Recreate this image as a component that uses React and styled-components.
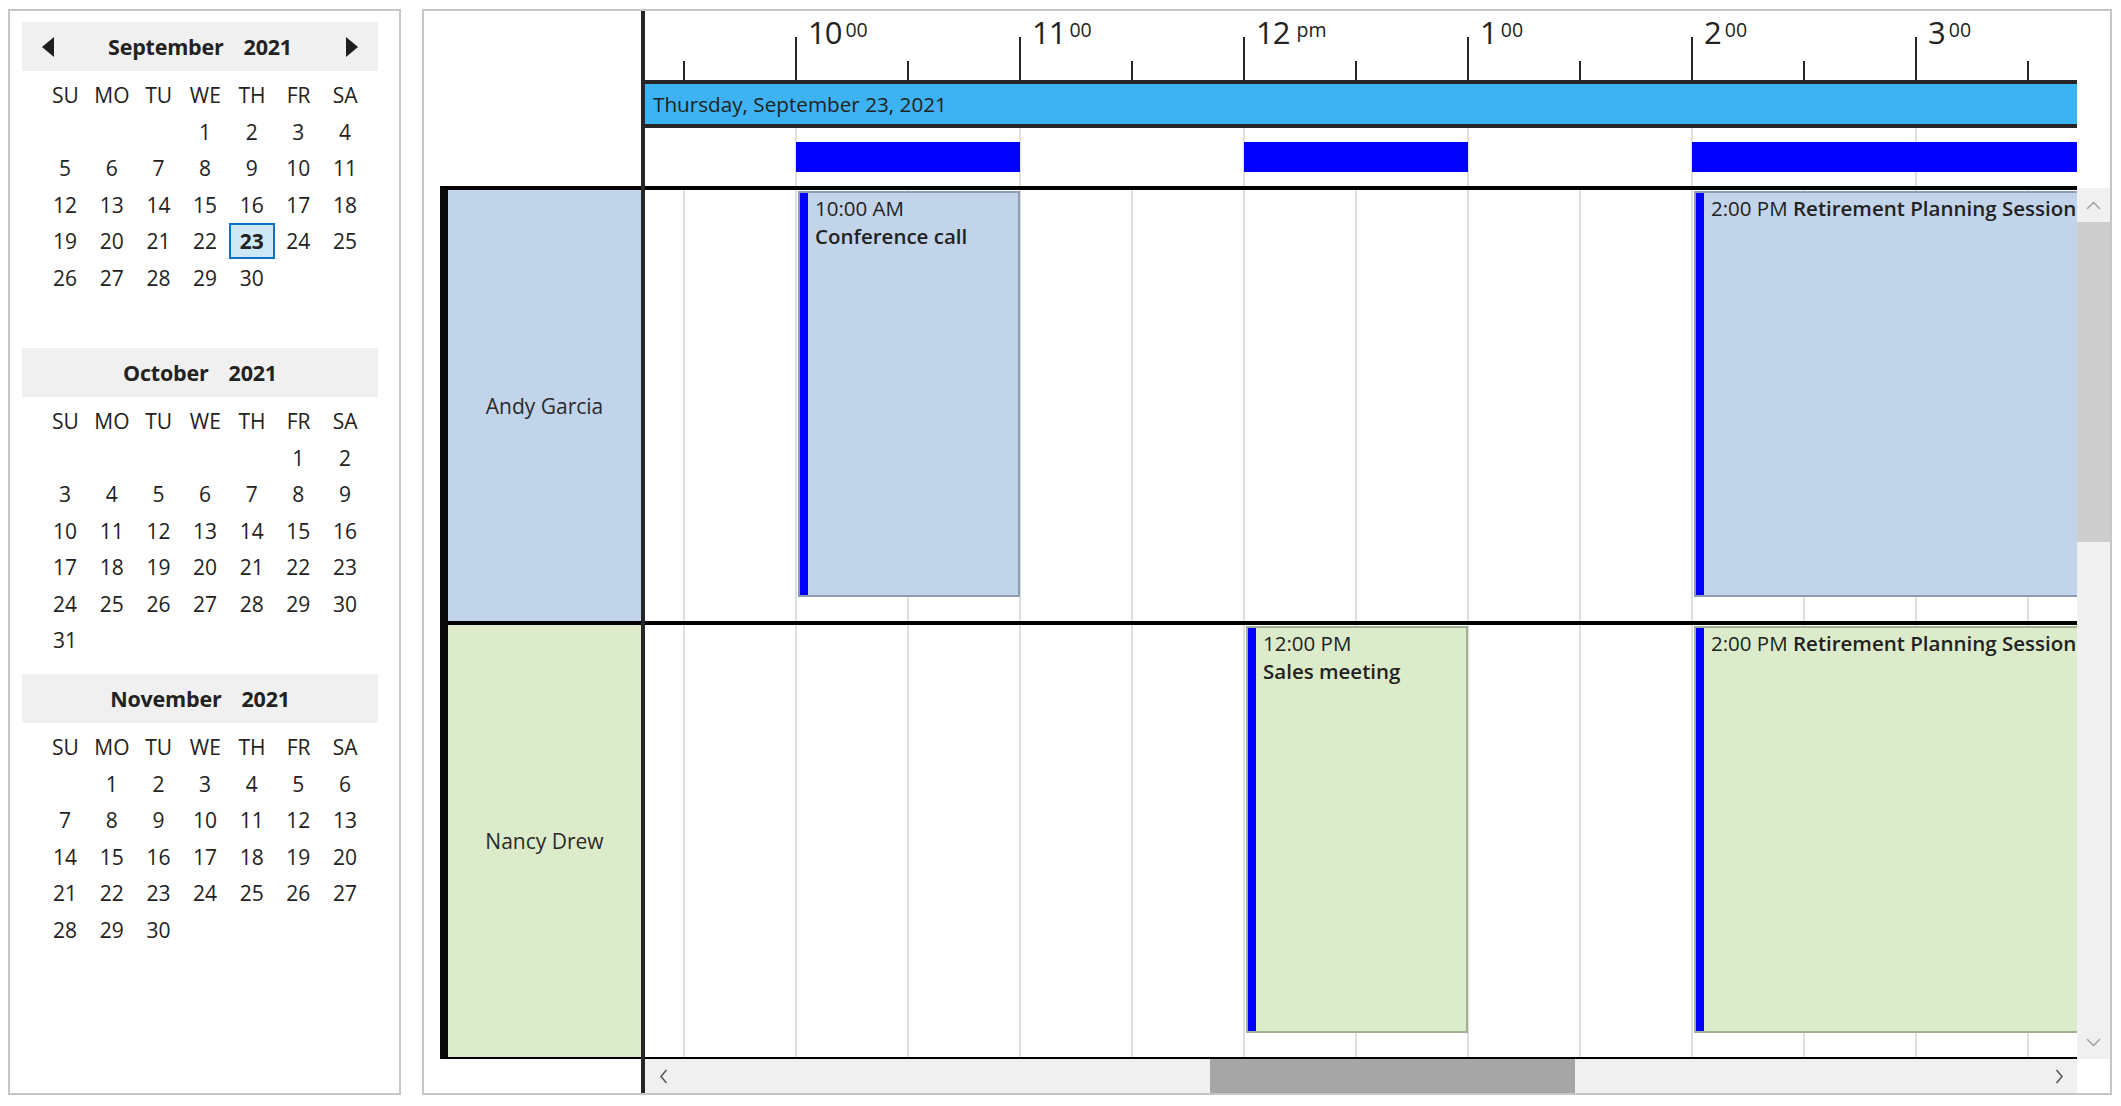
import React from 'react';
import styled, { createGlobalStyle } from 'styled-components';

const GlobalStyle = createGlobalStyle`
  html, body { margin: 0; padding: 0; background: #fff; }
  body { font-family: "Open Sans", "Noto Sans", sans-serif; color: #222; }
  *, *::before, *::after { box-sizing: border-box; }
`;

const HOUR_PX = 224;
const ORIGIN = 151;
const xAt = (h) => ORIGIN + (h - 10) * HOUR_PX;

const Page = styled.div`
  display: flex;
  align-items: flex-start;
  gap: 21px;
  padding: 9px 0 0 8px;
  width: 2121px;
  height: 1106px;
  overflow: hidden;
`;

/* ---------- Calendar ---------- */
const CalendarPanel = styled.div`
  width: 393px;
  height: 1086px;
  border: 2px solid #c6c6c6;
  padding: 11px 0 0 12px;
  background: #fff;
`;

const Month = styled.section`
  width: 356px;
`;

const MonthHeader = styled.div`
  height: 49px;
  background: #f0f0f0;
  display: grid;
  grid-template-columns: 12px 1fr 12px;
  align-items: center;
  padding: 0 20px;
`;

const MonthTitle = styled.div`
  display: flex;
  justify-content: center;
  gap: 20px;
  font-size: 21.5px;
  font-weight: 700;
  color: #222;
  letter-spacing: -0.2px;
`;

const ArrowSlot = styled.div`
  display: flex;
  align-items: center;
  justify-content: center;
  height: 20px;
`;

const DayGrid = styled.div`
  display: grid;
  grid-template-columns: repeat(7, 46.67px);
  grid-auto-rows: 36.5px;
  margin: 6px 0 15.5px 20px;
`;

const DayName = styled.div`
  display: flex;
  align-items: center;
  justify-content: center;
  font-size: 21px;
  color: #222;
`;

const DayCell = styled.div`
  display: flex;
  align-items: center;
  justify-content: center;
  font-size: 21px;
  color: #222;
  font-weight: ${(p) => (p.$selected ? 700 : 400)};
  background: ${(p) => (p.$selected ? '#cde9f6' : 'transparent')};
  border: 2px solid ${(p) => (p.$selected ? '#0a72c6' : 'transparent')};
  margin: 0 0.5px 0.5px 0;
`;

const DAY_NAMES = ['SU', 'MO', 'TU', 'WE', 'TH', 'FR', 'SA'];

const MONTHS = [
  { name: 'September', year: 2021, start: 3, days: 30, nav: true, selected: 23 },
  { name: 'October', year: 2021, start: 5, days: 31 },
  { name: 'November', year: 2021, start: 1, days: 30 },
];

function MonthCalendar({ m }) {
  const cells = [];
  for (let i = 0; i < 42; i++) {
    const d = i - m.start + 1;
    cells.push(d >= 1 && d <= m.days ? d : null);
  }
  return (
    <Month>
      <MonthHeader>
        <ArrowSlot>
          {m.nav && (
            <svg width="12" height="20" viewBox="0 0 12 20">
              <polygon points="12,0 12,20 0,10" fill="#1e1e1e" />
            </svg>
          )}
        </ArrowSlot>
        <MonthTitle>
          <span>{m.name}</span>
          <span>{m.year}</span>
        </MonthTitle>
        <ArrowSlot>
          {m.nav && (
            <svg width="12" height="20" viewBox="0 0 12 20">
              <polygon points="0,0 0,20 12,10" fill="#1e1e1e" />
            </svg>
          )}
        </ArrowSlot>
      </MonthHeader>
      <DayGrid>
        {DAY_NAMES.map((n) => (
          <DayName key={n}>{n}</DayName>
        ))}
        {cells.map((d, i) => (
          <DayCell key={i} $selected={d === m.selected}>
            {d ?? ''}
          </DayCell>
        ))}
      </DayGrid>
    </Month>
  );
}

/* ---------- Scheduler ---------- */
const SchedulerPanel = styled.div`
  width: 1690px;
  height: 1086px;
  border: 2px solid #c6c6c6;
  display: grid;
  grid-template-columns: 217px 4px 1432px 33px;
  grid-template-rows: 175px 873px 34px;
  background: #fff;
`;

const Blank = styled.div`
  background: #fff;
`;

const Divider = styled.div`
  grid-column: 2;
  grid-row: 1 / -1;
  background: #262626;
`;

const TimeHeader = styled.div`
  display: flex;
  flex-direction: column;
  overflow: hidden;
`;

const Ruler = styled.div`
  position: relative;
  height: 69px;
  overflow: hidden;
`;

const Tick = styled.div`
  position: absolute;
  bottom: 0;
  width: 2px;
  height: ${(p) => (p.$major ? 43 : 19)}px;
  background: #262626;
`;

const HourLabel = styled.div`
  position: absolute;
  top: 6px;
  display: flex;
  align-items: flex-start;
  color: #222;
  white-space: nowrap;
`;

const HourBig = styled.span`
  font-size: 31px;
  line-height: 1;
  letter-spacing: -1px;
`;

const HourSmall = styled.span`
  font-size: 19.5px;
  line-height: 1;
  margin-top: 3px;
  margin-left: ${(p) => (p.$pm ? 7 : 4)}px;
`;

const DateBar = styled.div`
  height: 48px;
  border-top: 4px solid #262626;
  border-bottom: 4px solid #262626;
  background: #3db3f4;
  display: flex;
  align-items: center;
  padding-left: 8px;
  font-size: 20.7px;
  color: #222;
`;

const BusyRow = styled.div`
  position: relative;
  height: 58px;
  background-image: linear-gradient(to right, #e0e0e0 0 2px, transparent 2px);
  background-size: ${HOUR_PX}px 100%;
  background-position: ${ORIGIN - 1}px 0;
  background-repeat: repeat-x;
  overflow: hidden;
`;

const BusyBar = styled.div`
  position: absolute;
  top: 14px;
  height: 30px;
  background: #0000ff;
`;

const ResourceList = styled.div`
  margin-left: 16px;
  display: grid;
  grid-template-rows: 431px 436px;
  border-left: 8px solid #0a0a0a;
  border-top: 4px solid #000;
  border-bottom: 2px solid #000;
`;

const ResourceCell = styled.div`
  background: ${(p) => p.$fill};
  display: flex;
  align-items: center;
  justify-content: center;
  font-size: 21px;
  color: #2a2a2a;
  & + & {
    border-top: 4px solid #000;
  }
`;

const TimelineBody = styled.div`
  display: grid;
  grid-template-rows: 431px 436px;
  border-top: 4px solid #000;
  border-bottom: 2px solid #000;
  overflow: hidden;
`;

const TimelineRow = styled.div`
  position: relative;
  overflow: hidden;
  background-image: linear-gradient(to right, #dfdfdf 0 2px, transparent 2px);
  background-size: ${HOUR_PX / 2}px 100%;
  background-position: ${ORIGIN - HOUR_PX / 2 - 1}px 0;
  background-repeat: repeat-x;
  & + & {
    border-top: 4px solid #000;
  }
`;

const EventCard = styled.div`
  position: absolute;
  top: 1px;
  bottom: 24px;
  display: flex;
  background: ${(p) => p.$fill};
  border: 2px solid ${(p) => p.$edge};
  overflow: hidden;
`;

const EventAccent = styled.div`
  width: 8px;
  flex: none;
  background: #0000ff;
`;

const EventContent = styled.div`
  padding: 1px 0 0 7px;
  font-size: 20.5px;
  line-height: 28px;
  color: #222;
  white-space: nowrap;
`;

const EventTitle = styled.span`
  font-weight: 600;
`;

const VScroll = styled.div`
  margin-top: 2px;
  background: #f0f0f0;
  display: flex;
  flex-direction: column;
`;

const ScrollButton = styled.div`
  flex: none;
  width: ${(p) => p.$w || '100%'};
  height: ${(p) => p.$h || '100%'};
  display: flex;
  align-items: center;
  justify-content: center;
`;

const VThumb = styled.div`
  height: 320px;
  background: #cdcdcd;
`;

const Spacer = styled.div`
  flex: 1;
`;

const HScroll = styled.div`
  background: #f0f0f0;
  display: flex;
  align-items: stretch;
`;

const HThumb = styled.div`
  width: 365px;
  background: #a6a6a6;
`;

const RESOURCES = [
  {
    name: 'Andy Garcia',
    fill: '#c2d4e9',
    edge: '#8e9db2',
    events: [
      { start: 10, end: 11, time: '10:00 AM', title: 'Conference call', stacked: true },
      { start: 14, end: 17, time: '2:00 PM', title: 'Retirement Planning Session' },
    ],
  },
  {
    name: 'Nancy Drew',
    fill: '#dcebc9',
    edge: '#a2b195',
    events: [
      { start: 12, end: 13, time: '12:00 PM', title: 'Sales meeting', stacked: true },
      { start: 14, end: 17, time: '2:00 PM', title: 'Retirement Planning Session' },
    ],
  },
];

const TICKS = [];
for (let h = 9.5; h <= 16; h += 0.5) TICKS.push(h);

const LABELS = [
  { h: 10, big: '10', small: '00' },
  { h: 11, big: '11', small: '00' },
  { h: 12, big: '12', small: 'pm', pm: true },
  { h: 13, big: '1', small: '00' },
  { h: 14, big: '2', small: '00' },
  { h: 15, big: '3', small: '00' },
];

const BUSY = [
  [10, 11],
  [12, 13],
  [14, 17],
];

const ChevronLeft = () => (
  <svg width="9" height="15" viewBox="0 0 9 15">
    <polyline points="7.5,1 2,7.5 7.5,14" fill="none" stroke="#5a5a5a" strokeWidth="1.6" />
  </svg>
);
const ChevronRight = () => (
  <svg width="9" height="15" viewBox="0 0 9 15">
    <polyline points="1.5,1 7,7.5 1.5,14" fill="none" stroke="#5a5a5a" strokeWidth="1.6" />
  </svg>
);
const ChevronUp = () => (
  <svg width="15" height="9" viewBox="0 0 15 9">
    <polyline points="1,8 7.5,1.5 14,8" fill="none" stroke="#a6a6a6" strokeWidth="1.6" />
  </svg>
);
const ChevronDown = () => (
  <svg width="15" height="9" viewBox="0 0 15 9">
    <polyline points="1,1 7.5,7.5 14,1" fill="none" stroke="#a6a6a6" strokeWidth="1.6" />
  </svg>
);

function Scheduler() {
  return (
    <SchedulerPanel>
      <Blank />
      <Divider />
      <TimeHeader>
        <Ruler>
          {TICKS.map((h) => (
            <Tick key={h} $major={h % 1 === 0} style={{ left: xAt(h) - 1 }} />
          ))}
          {LABELS.map((l) => (
            <HourLabel key={l.h} style={{ left: xAt(l.h) + 12 }}>
              <HourBig>{l.big}</HourBig>
              <HourSmall $pm={l.pm}>{l.small}</HourSmall>
            </HourLabel>
          ))}
        </Ruler>
        <DateBar>Thursday, September 23, 2021</DateBar>
        <BusyRow>
          {BUSY.map(([s, e]) => (
            <BusyBar key={s} style={{ left: xAt(s), width: (e - s) * HOUR_PX }} />
          ))}
        </BusyRow>
      </TimeHeader>
      <Blank />

      <ResourceList>
        {RESOURCES.map((r) => (
          <ResourceCell key={r.name} $fill={r.fill}>
            {r.name}
          </ResourceCell>
        ))}
      </ResourceList>
      <TimelineBody>
        {RESOURCES.map((r) => (
          <TimelineRow key={r.name}>
            {r.events.map((ev) => (
              <EventCard
                key={ev.start}
                $fill={r.fill}
                $edge={r.edge}
                style={{ left: xAt(ev.start) + 2, width: (ev.end - ev.start) * HOUR_PX - 2 }}
              >
                <EventAccent />
                <EventContent>
                  {ev.stacked ? (
                    <>
                      <div>{ev.time}</div>
                      <EventTitle>{ev.title}</EventTitle>
                    </>
                  ) : (
                    <>
                      {ev.time} <EventTitle>{ev.title}</EventTitle>
                    </>
                  )}
                </EventContent>
              </EventCard>
            ))}
          </TimelineRow>
        ))}
      </TimelineBody>
      <VScroll>
        <ScrollButton $h="34px">
          <ChevronUp />
        </ScrollButton>
        <VThumb />
        <Spacer />
        <ScrollButton $h="34px">
          <ChevronDown />
        </ScrollButton>
      </VScroll>

      <Blank />
      <HScroll>
        <ScrollButton $w="36px">
          <ChevronLeft />
        </ScrollButton>
        <Spacer style={{ flex: 'none', width: 529 }} />
        <HThumb />
        <Spacer />
        <ScrollButton $w="36px">
          <ChevronRight />
        </ScrollButton>
      </HScroll>
      <Blank />
    </SchedulerPanel>
  );
}

export default function App() {
  return (
    <>
      <GlobalStyle />
      <Page>
        <CalendarPanel>
          {MONTHS.map((m) => (
            <MonthCalendar key={m.name} m={m} />
          ))}
        </CalendarPanel>
        <Scheduler />
      </Page>
    </>
  );
}
